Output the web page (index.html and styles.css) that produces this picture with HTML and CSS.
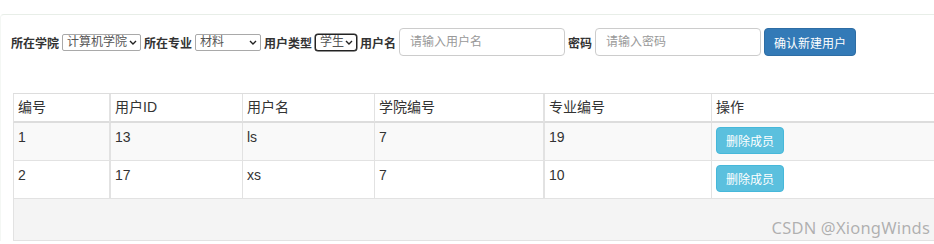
FILE: index.html
```html
<!DOCTYPE html>
<html lang="zh-CN">
<head>
  <meta charset="UTF-8" />
  <meta name="viewport" content="width=device-width, initial-scale=1.0"/>
  <title>成员管理</title>
  <link rel="stylesheet" href="styles.css">
</head>
<body>

  <div class="panel">
    <!-- 新建用户 -->
    <form class="toolbar">
      <label class="lbl">所在学院</label>
      <span class="select select-college">计算机学院
        <svg class="caret" viewBox="0 0 8 5"><path d="M1 1l3 3 3-3" /></svg>
      </span>
      <label class="lbl">所在专业</label>
      <span class="select select-major">材料
        <svg class="caret" viewBox="0 0 8 5"><path d="M1 1l3 3 3-3" /></svg>
      </span>
      <label class="lbl">用户类型</label>
      <span class="select select-type">学生
        <svg class="caret" viewBox="0 0 8 5"><path d="M1 1l3 3 3-3" /></svg>
      </span>
      <label class="lbl">用户名</label>
      <input class="field" type="text" placeholder="请输入用户名">
      <label class="lbl">密码</label>
      <input class="field" type="password" placeholder="请输入密码">
      <button class="btn btn-primary" type="button">确认新建用户</button>
    </form>

    <!-- 成员列表 -->
    <div class="table-wrap">
      <table class="members">
        <thead>
          <tr>
            <th class="c-no">编号</th>
            <th class="c-id">用户ID</th>
            <th class="c-name">用户名</th>
            <th class="c-college">学院编号</th>
            <th class="c-major">专业编号</th>
            <th class="c-op">操作</th>
          </tr>
        </thead>
        <tbody>
          <tr class="odd">
            <td>1</td>
            <td class="c-id">13</td>
            <td>ls</td>
            <td>7</td>
            <td class="c-major">19</td>
            <td><button class="btn btn-info" type="button">删除成员</button></td>
          </tr>
          <tr>
            <td>2</td>
            <td class="c-id">17</td>
            <td>xs</td>
            <td>7</td>
            <td class="c-major">10</td>
            <td><button class="btn btn-info" type="button">删除成员</button></td>
          </tr>
        </tbody>
      </table>
      <div class="table-foot"></div>
    </div>
  </div>

  <div class="watermark">CSDN @XiongWinds</div>

</body>
</html>
```

FILE: styles.css
```css
* {
  margin: 0;
  padding: 0;
  box-sizing: border-box;
}

html, body {
  height: 100%;
  overflow: hidden;
  background: #fff;
  color: #333;
  font-family: "Liberation Sans", "Noto Sans CJK SC", sans-serif;
  font-size: 14px;
  position: relative;
}

.panel {
  margin-top: 14px;
  padding-top: 13px;
  border-top: 1px solid #e8eee8;
  border-left: 1px solid #f4f7f4;
  border-radius: 4px 0 0 0;
}

/* toolbar */
.toolbar {
  display: flex;
  align-items: center;
  gap: 3px;
  height: 28px;
  padding-left: 10px;
  font-size: 12px;
}

.lbl {
  font-weight: bold;
  color: #333;
}

.select {
  display: flex;
  align-items: center;
  justify-content: space-between;
  height: 17px;
  padding: 0 3px 0 4px;
  border: 1px solid #a9a9a9;
  border-radius: 2px;
  color: #555;
  background: #fff;
  font-size: 12px;
  line-height: 15px;
}

.select-college { width: 79px; }
.select-major { width: 66px; }
.select-type {
  width: 42px;
  border: 1px solid #222;
  border-radius: 3px;
  box-shadow: 0 0 0 0.5px #222;
}

.caret {
  width: 8px;
  height: 5px;
  fill: none;
  stroke: #222;
  stroke-width: 1.4;
}

.field {
  width: 166px;
  height: 28px;
  padding: 0 10px;
  border: 1px solid #ccc;
  border-radius: 4px;
  font-family: inherit;
  font-size: 12px;
  color: #555;
  outline: none;
}

.field::placeholder {
  color: #999;
}

.btn {
  display: inline-block;
  border: 1px solid transparent;
  border-radius: 4px;
  color: #fff;
  font-family: inherit;
  font-size: 12px;
  cursor: pointer;
}

.btn-primary {
  height: 28px;
  padding: 0 9px;
  background-color: #337ab7;
  border-color: #2e6da4;
}

.btn-info {
  height: 27px;
  padding: 0 9px;
  background-color: #5bc0de;
  border-color: #46b8da;
}

/* table */
.table-wrap {
  margin: 37px 0 0 12px;
  width: 1000px;
}

.members {
  width: 100%;
  table-layout: fixed;
  border-spacing: 0;
  border-top: 1px solid #ddd;
}

.members th,
.members td {
  text-align: left;
  vertical-align: top;
  line-height: 20px;
  border-left: 1px solid #e2e2e2;
}

.members th {
  font-weight: normal;
  padding: 3px 4px 4px;
  border-bottom: 2px solid #ddd;
}

.members td {
  padding: 4px 4px 6px;
  border-bottom: 1px solid #e2e2e2;
}

.members .c-id,
.members .c-major {
  border-left: 2px solid #e2e2e2;
}

.members .c-no { width: 96px; }
.members .c-id { width: 133px; }
.members .c-name { width: 132px; }
.members .c-college { width: 169px; }
.members .c-major { width: 168px; }

.members tr.odd td {
  background: #f9f9f9;
}

.table-foot {
  height: 42px;
  background: #f4f4f4;
  border-left: 1px solid #e2e2e2;
  border-bottom: 1px solid #e2e2e2;
}

.watermark {
  position: absolute;
  right: 4px;
  bottom: 5px;
  font-family: "Noto Sans", sans-serif;
  font-size: 16.5px;
  letter-spacing: 0.2px;
  color: #b0b0b0;
  text-shadow: 0 0 1px #fff;
}
```
